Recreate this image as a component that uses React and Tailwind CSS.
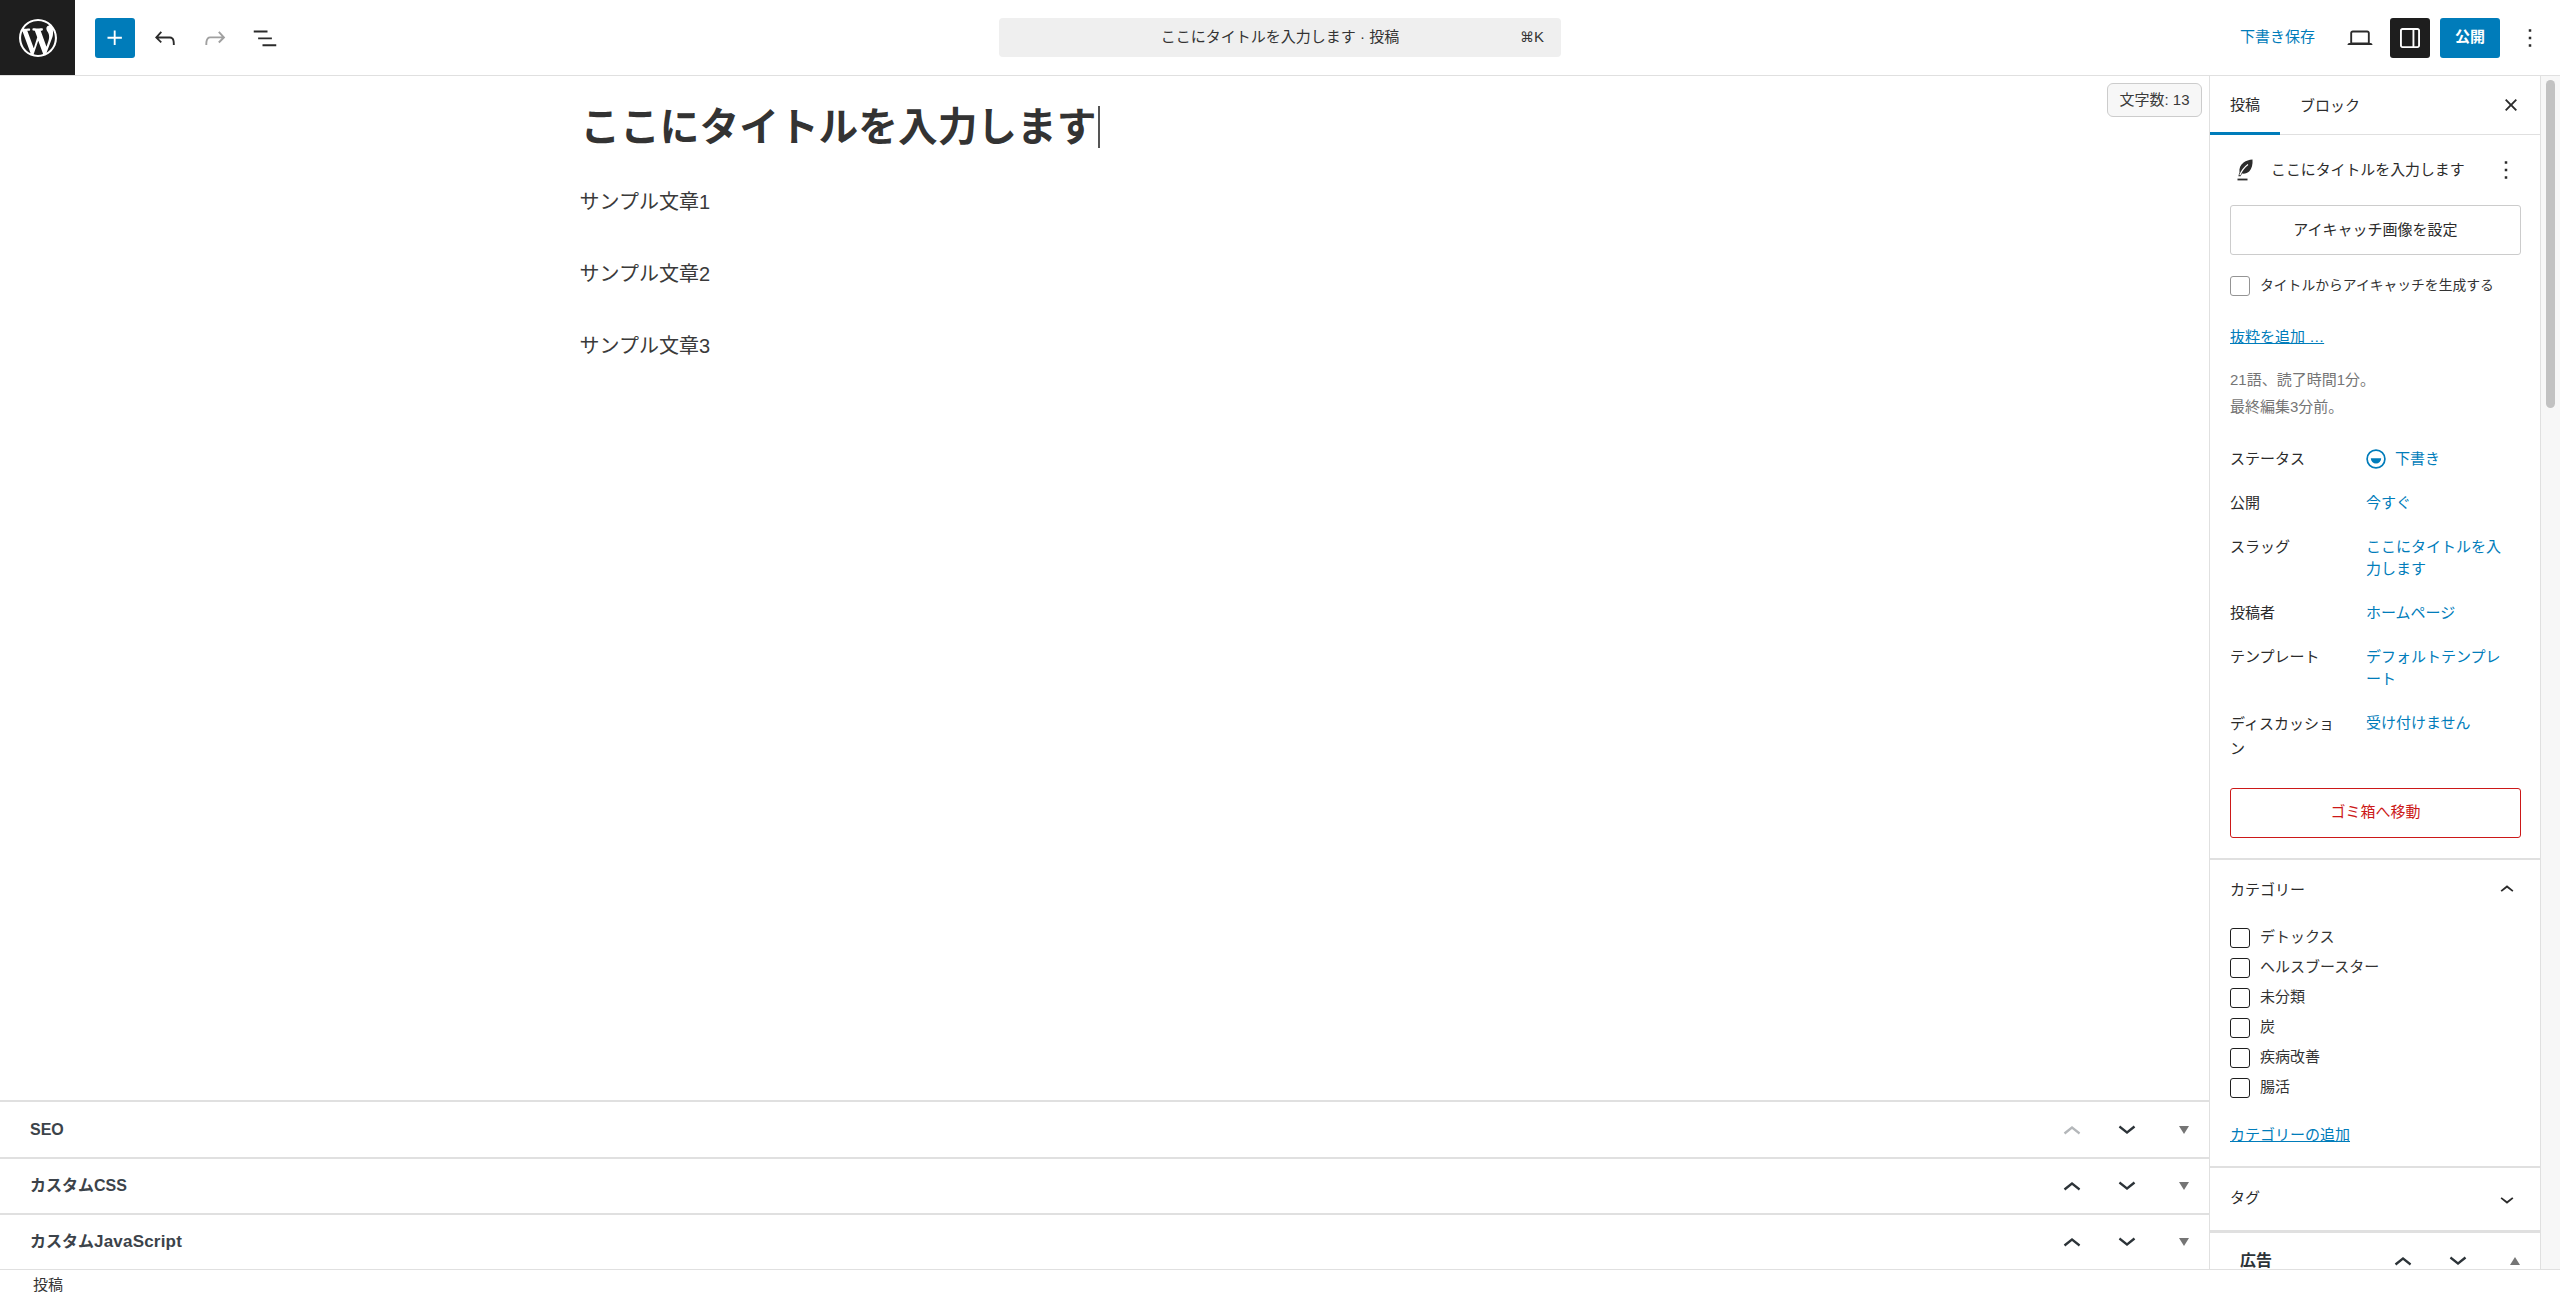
import React from "react";

const Icon = ({ d, size = 30, className = "" }) => (
  <svg viewBox="0 0 24 24" width={size} height={size} fill="currentColor" className={className}>
    <path d={d} />
  </svg>
);

const P = {
  plus: "M11 12.5V17.5H12.5V12.5H17.5V11H12.5V6H11V11H6V12.5H11Z",
  undo: "M18.3 11.7c-.6-.6-1.4-.9-2.3-.9H6.7l2.9-3.3-1.1-1-4.5 5L8.5 16l1-1-2.7-2.7H16c.5 0 .9.2 1.3.5 1 1 1 3.4 1 4.5v.3h1.5v-.2c0-1.5 0-4.3-1.5-5.7z",
  redo: "M15.6 6.5l-1.1 1 2.9 3.3H8c-.9 0-1.7.3-2.3.9-1.4 1.5-1.4 4.2-1.4 5.6v.2h1.5v-.3c0-1.1 0-3.5 1-4.5.3-.3.7-.5 1.3-.5h9.2L14.5 15l1.1 1.1 4.6-4.6-4.6-5z",
  list: "M3 6h11v1.5H3V6Zm3.5 5.5h11V13h-11v-1.5ZM21 17H10v1.5h11V17Z",
  laptop: "M20.5 16h-.7V8c0-1.1-.9-2-2-2H6.2c-1.1 0-2 .9-2 2v8h-.7c-.8 0-1.5.7-1.5 1.5h20c0-.8-.7-1.5-1.5-1.5zM5.7 8c0-.3.2-.5.5-.5h11.6c.3 0 .5.2.5.5v7.6H5.7V8z",
  drawer: "M18 4H6c-1.1 0-2 .9-2 2v12c0 1.1.9 2 2 2h12c1.1 0 2-.9 2-2V6c0-1.1-.9-2-2-2zm-4 14.5H6c-.3 0-.5-.2-.5-.5V6c0-.3.2-.5.5-.5h8v13zm4.5-.5c0 .3-.2.5-.5.5h-2.5v-13H18c.3 0 .5.2.5.5v12z",
  more: "M13 19h-2v-2h2v2zm0-6h-2v-2h2v2zm0-6h-2V5h2v2z",
  close: "M12 13.06l3.712 3.713 1.061-1.06L13.061 12l3.712-3.712-1.06-1.06L12 10.938 8.288 7.227l-1.061 1.06L10.939 12l-3.712 3.712 1.06 1.061L12 13.061z",
  up: "M6.5 12.4L12 8l5.5 4.4-.9 1.2L12 10l-4.5 3.6-1-1.2z",
  down: "M17.5 11.6L12 16l-5.5-4.4.9-1.2L12 14l4.5-3.6 1 1.2z",
};

const WpLogo = () => (
  <svg viewBox="0 0 20 20" width={38} height={38} fill="currentColor">
    <path d="M20 10c0-5.51-4.49-10-10-10C4.48 0 0 4.49 0 10c0 5.52 4.48 10 10 10 5.51 0 10-4.48 10-10zM7.78 15.37L4.37 6.22c.55-.02 1.17-.08 1.17-.08.5-.06.44-1.13-.06-1.11 0 0-1.45.11-2.37.11-.18 0-.37 0-.58-.01C4.12 2.69 6.87 1.11 10 1.11c2.33 0 4.45.87 6.05 2.34-.68-.11-1.65.39-1.65 1.58 0 .74.45 1.36.9 2.1.35.61.55 1.36.55 2.46 0 1.49-1.4 5-1.4 5l-3.03-8.37c.54-.02.82-.17.82-.17.5-.05.44-1.25-.06-1.22 0 0-1.44.12-2.38.12-.87 0-2.33-.12-2.33-.12-.5-.03-.56 1.2-.06 1.22l.92.08 1.26 3.41zM17.41 10c.24-.64.74-1.87.43-4.25.7 1.29 1.05 2.71 1.05 4.25 0 3.29-1.73 6.24-4.4 7.78.97-2.59 1.94-5.11 2.92-7.78zM6.1 18.09C3.12 16.65 1.11 13.53 1.11 10c0-1.3.23-2.48.72-3.59C3.25 10.3 4.67 14.2 6.1 18.09zm4.03-6.63l2.58 6.98c-.86.29-1.76.45-2.71.45-.79 0-1.57-.11-2.29-.33.81-2.38 1.62-4.74 2.42-7.1z" fillRule="evenodd" />
  </svg>
);

const Feather = () => (
  <svg viewBox="0 0 16 22" width={16} height={22}>
    <path d="M15.5 0.5C15.9 5.5 14.8 9.6 12.4 12.2C10.5 14.2 7.8 15 5 14.6L3.6 17.2H1.4C1.7 15.8 2 14.6 2.5 13.4C1.9 9.2 3.4 5.6 6.6 3.4C9 1.7 12.2 0.7 15.5 0.5Z" fill="currentColor" />
    <path d="M2.8 16.2C4.8 11.6 7.4 8.2 11 5.6" stroke="#fff" strokeWidth="1.2" fill="none" />
    <rect x="0.5" y="19.6" width="10" height="1.8" fill="currentColor" />
  </svg>
);

const DraftIcon = () => (
  <svg viewBox="0 0 20 20" width={20} height={20} className="text-[#007cba] shrink-0 mt-[1px]" fill="none">
    <circle cx="10" cy="10" r="8.9" stroke="currentColor" strokeWidth="1.7" />
    <path d="M4.8 9.2H15.2A5.2 5.2 0 0 1 4.8 9.2Z" fill="currentColor" />
  </svg>
);

const Tri = ({ up }) => (
  <svg viewBox="0 0 10 8" width={10} height={8} fill="#757575">
    <path d={up ? "M5 0L10 8H0Z" : "M0 0H10L5 8Z"} />
  </svg>
);

const Box = ({ gray }) => (
  <span className={`block w-[20px] h-[20px] shrink-0 rounded-[3px] border-[1.5px] bg-white ${gray ? "border-[#949494]" : "border-[#1e1e1e]"}`} />
);

const Meta = ({ label, value, icon, labelCls = "leading-[22px]" }) => (
  <div className="flex">
    <div className={`w-[136px] shrink-0 pr-[23px] ${labelCls}`}>{label}</div>
    <div className="flex-1 pr-[15px] flex items-start gap-[9px] text-[#007cba] leading-[22px]">
      {icon}
      <span>{value}</span>
    </div>
  </div>
);

const MetaBox = ({ title, up = true, tall = false }) => (
  <div className={`${tall ? "h-[57px]" : "h-[56px]"} shrink-0 border-t-2 border-[#e0e0e0] flex items-center pl-[30px] bg-white`}>
    <div className="flex-1 text-[16px] font-bold text-[#3c434a]">{title}</div>
    <div className="flex items-center">
      <Icon d={P.up} size={36} className={`translate-y-[2px] ${up ? "text-[#2c3338]" : "text-[#b4b7ba]"}`} />
      <Icon d={P.down} size={36} className="text-[#2c3338] ml-[19px] -translate-y-[2px]" />
      <span className="ml-[34px] mr-[20px]"><Tri /></span>
    </div>
  </div>
);

export default function App() {
  return (
    <div className="h-[1300px] w-[2560px] overflow-hidden flex flex-col bg-white text-[#2b2b2b] text-[15px] font-['Liberation_Sans','Noto_Sans_CJK_JP',sans-serif]">
      <header className="h-[76px] shrink-0 border-b border-[#e0e0e0] grid grid-cols-[999px_562px_1fr] items-center">
        <div className="flex items-center h-[75px]">
          <div className="w-[75px] h-[75px] bg-[#1e1e1e] text-white flex items-center justify-center"><WpLogo /></div>
          <button className="ml-[20px] w-[40px] h-[40px] rounded-[3px] bg-[#007cba] text-white flex items-center justify-center"><Icon d={P.plus} /></button>
          <span className="w-[50px] ml-[5px] flex justify-center"><Icon d={P.undo} /></span>
          <span className="w-[50px] flex justify-center text-[#a0a0a0]"><Icon d={P.redo} /></span>
          <span className="w-[50px] flex justify-center"><Icon d={P.list} /></span>
        </div>
        <div className="relative h-[39px] rounded-[4px] bg-[#efefef] flex items-center justify-center text-[15px] text-[#333]">
          <span>ここにタイトルを入力します · 投稿</span>
          <span className="absolute right-[17px]"><span className="font-['DejaVu_Sans',sans-serif] text-[14px]">⌘</span>K</span>
        </div>
        <div className="flex items-center justify-end pr-[10px]">
          <span className="text-[#007cba] mr-[20px]">下書き保存</span>
          <span className="w-[50px] flex justify-center mr-[5px]"><Icon d={P.laptop} /></span>
          <span className="w-[40px] h-[40px] rounded-[3px] bg-[#1e1e1e] text-white flex items-center justify-center"><Icon d={P.drawer} /></span>
          <span className="w-[60px] h-[40px] ml-[10px] rounded-[3px] bg-[#007cba] text-white font-bold flex items-center justify-center">公開</span>
          <span className="w-[40px] ml-[10px] flex justify-center"><Icon d={P.more} /></span>
        </div>
      </header>

      <main className="flex-1 min-h-0 flex">
        <section className="w-[2209px] shrink-0 flex flex-col">
          <div className="flex-1 min-h-0 relative text-[#3a3a3a]">
            <div className="absolute right-[7px] top-[7px] w-[95px] h-[34px] rounded-[6px] border border-[#ccc] bg-[#f7f7f7] flex items-center justify-center text-[15px]">文字数: 13</div>
            <div className="w-[1050px] mx-auto pt-[23px]">
              <h1 className="pl-[1px] text-[39.7px] leading-[56px] font-bold flex items-center text-[#333]">
                ここにタイトルを入力します<span className="ml-[2px] inline-block w-[1.5px] h-[42px] bg-[#555]" />
              </h1>
              <p className="mt-[31px] text-[20px] leading-[32px]">サンプル文章1</p>
              <p className="mt-[40px] text-[20px] leading-[32px]">サンプル文章2</p>
              <p className="mt-[40px] text-[20px] leading-[32px]">サンプル文章3</p>
            </div>
          </div>
          <MetaBox title="SEO" up={false} tall />
          <MetaBox title="カスタムCSS" />
          <MetaBox title={<>カスタム<span className="text-[17px] tracking-[0.2px]">JavaScript</span></>} />
        </section>

        <aside className="w-[332px] shrink-0 border-l border-r border-[#e0e0e0] overflow-hidden">
          <div className="h-[59px] border-b border-[#e0e0e0] flex items-stretch relative">
            <div className="w-[70px] flex items-center justify-center border-b-[3px] border-[#007cba] -mb-px pt-[2px]">投稿</div>
            <div className="w-[100px] flex items-center justify-center pt-[2px]">ブロック</div>
            <div className="flex-1 flex items-center justify-end pr-[14px]"><Icon d={P.close} /></div>
          </div>

          <div className="pl-[20px] pr-[19px] pb-[20px] border-b-2 border-[#e0e0e0]">
            <div className="h-[70px] flex items-center">
              <span className="ml-[7px] w-[31px] flex"><Feather /></span>
              <span className="flex-1 ml-[3px] text-[14.9px]">ここにタイトルを入力します</span>
              <Icon d={P.more} />
            </div>
            <div className="h-[50px] rounded-[3px] border border-[#ccc] flex items-center justify-center">アイキャッチ画像を設定</div>
            <div className="mt-[21px] flex items-center gap-[10px] text-[13.8px] text-[#333]"><Box gray />タイトルからアイキャッチを生成する</div>
            <div className="mt-[28px] leading-[24px] text-[#007cba] underline">抜粋を追加 …</div>
            <div className="mt-[17px] leading-[27px] text-[#757575]">21語、読了時間1分。<br />最終編集3分前。</div>
            <div className="mt-[28px] flex flex-col gap-[22px]">
              <Meta label="ステータス" value="下書き" icon={<DraftIcon />} />
              <Meta label="公開" value="今すぐ" />
              <Meta label="スラッグ" value="ここにタイトルを入力します" />
              <Meta label="投稿者" value="ホームページ" />
              <Meta label="テンプレート" value="デフォルトテンプレート" />
              <Meta label="ディスカッション" value="受け付けません" labelCls="leading-[25px] -mt-[1px]" />
            </div>
            <div className="mt-[27px] h-[50px] rounded-[3px] border border-[#cc1818] text-[#cc1818] flex items-center justify-center">ゴミ箱へ移動</div>
          </div>

          <div className="pl-[20px] pr-[19px] pb-[19px] border-b-2 border-[#e0e0e0]">
            <div className="h-[61px] flex items-center justify-between">
              <span>カテゴリー</span>
              <Icon d={P.up} size={28} />
            </div>
            <div className="mt-[7px] flex flex-col gap-[10px]">
              {["デトックス", "ヘルスブースター", "未分類", "炭", "疾病改善", "腸活"].map((c) => (
                <div key={c} className="h-[20px] flex items-center gap-[10px] text-[#333]"><Box />{c}</div>
              ))}
            </div>
            <div className="mt-[25px] leading-[24px] text-[#007cba] underline">カテゴリーの追加</div>
          </div>

          <div className="pl-[20px] pr-[19px] h-[65px] flex items-center justify-between border-b-[3px] border-[#e0e0e0]">
            <span>タグ</span>
            <Icon d={P.down} size={28} />
          </div>

          <div className="pl-[30px] h-[56px] flex items-center">
            <span className="flex-1 text-[16px] font-bold text-[#2c3338]">広告</span>
            <Icon d={P.up} size={36} className="text-[#2c3338] translate-y-[2px]" />
            <Icon d={P.down} size={36} className="text-[#2c3338] ml-[19px] -translate-y-[2px]" />
            <span className="ml-[34px] mr-[20px]"><Tri up /></span>
          </div>
        </aside>

        <div className="flex-1 bg-[#f7f7f7] pt-[4px] pl-[5px]">
          <div className="w-[9px] h-[328px] rounded-full bg-[#c2c2c2]" />
        </div>
      </main>

      <footer className="h-[31px] shrink-0 border-t border-[#e0e0e0] flex items-center pl-[33px] text-[#333]">投稿</footer>
    </div>
  );
}
